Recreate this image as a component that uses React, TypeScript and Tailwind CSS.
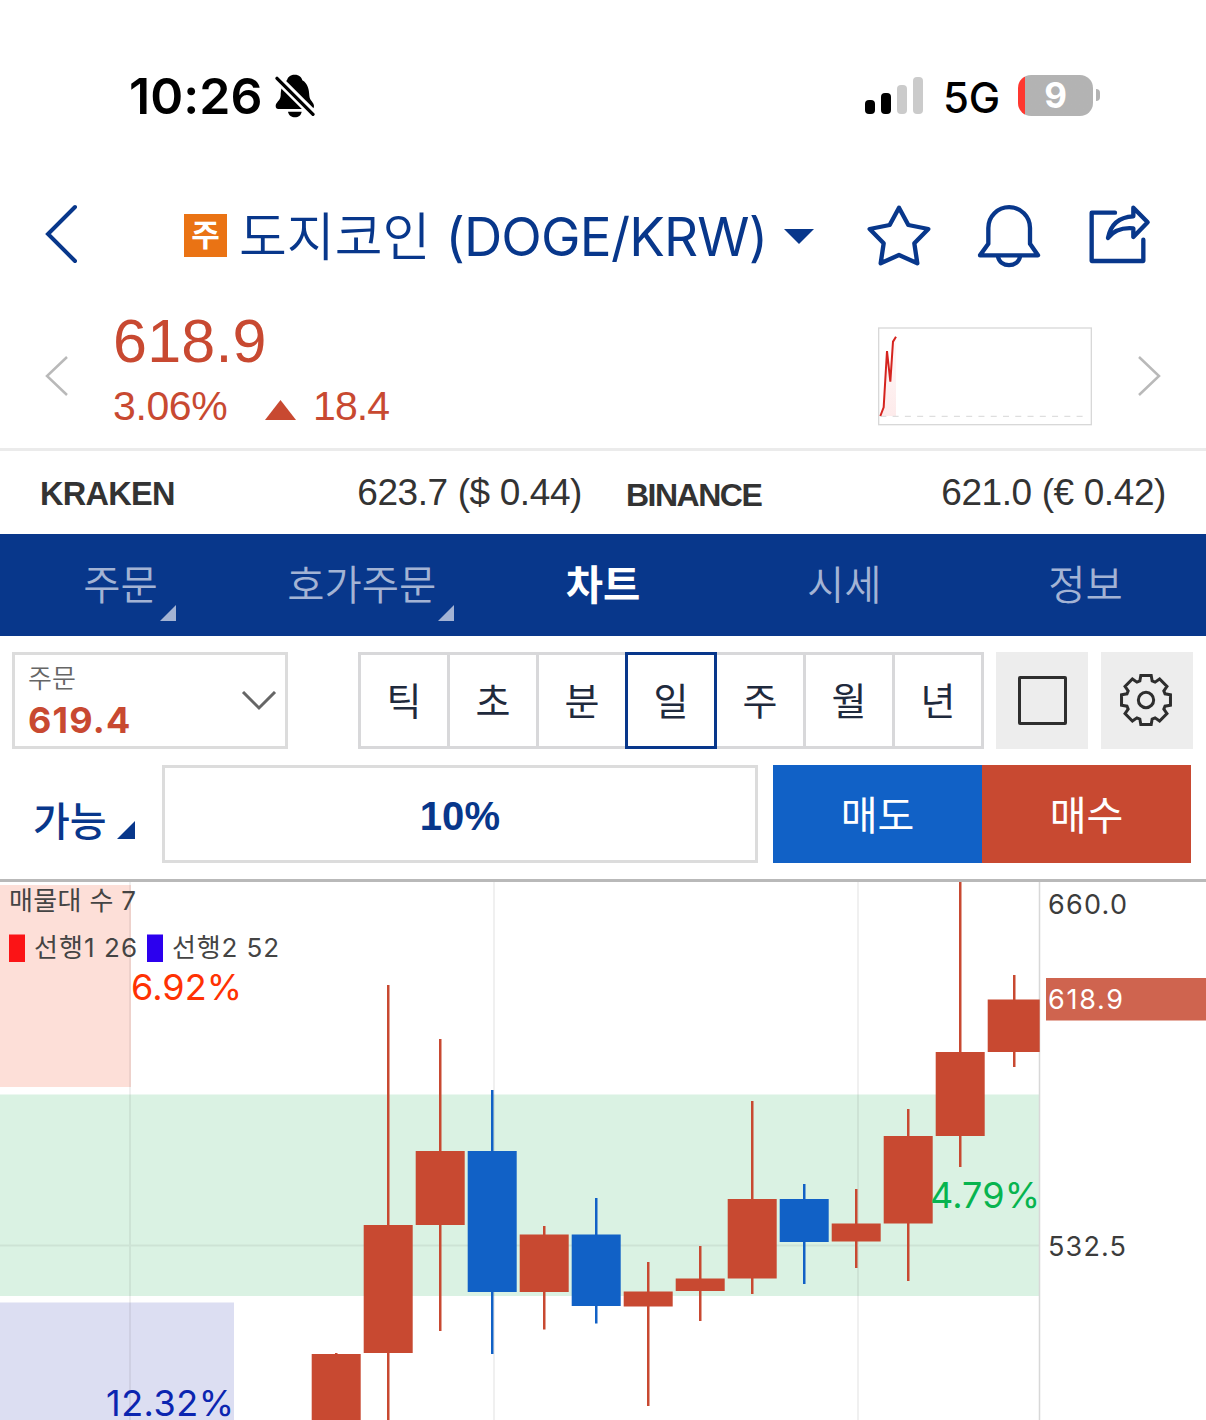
import { clsx } from 'clsx';

type Candle = {
  x: number;
  high: number;
  top: number;
  bottom: number;
  low: number;
  down?: boolean;
  w?: number;
};

const UP = '#c84931';
const DOWN = '#1161c6';

const CANDLES: Candle[] = [
  { x: 312, high: 471, top: 472, bottom: 560, low: 560 },
  { x: 364, high: 103, top: 343, bottom: 471, low: 560 },
  { x: 416, high: 157, top: 269, bottom: 343, low: 449 },
  { x: 468, high: 208, top: 269, bottom: 410, low: 472, down: true },
  { x: 520, high: 344, top: 352.5, bottom: 410, low: 447.5 },
  { x: 572, high: 316, top: 352.5, bottom: 424, low: 441.5, down: true },
  { x: 624, high: 380, top: 409.5, bottom: 424.5, low: 524 },
  { x: 676, high: 364, top: 396.5, bottom: 409, low: 439 },
  { x: 728, high: 219, top: 317, bottom: 396.5, low: 412 },
  { x: 780, high: 302, top: 317, bottom: 360, low: 402, down: true },
  { x: 832, high: 307, top: 341.5, bottom: 359.5, low: 386 },
  { x: 884, high: 227, top: 254, bottom: 341.5, low: 399 },
  { x: 936, high: 0, top: 170, bottom: 254, low: 285 },
  { x: 988, high: 93, top: 117.5, bottom: 170, low: 185, w: 52 },
];

const TABS = [
  { label: '주문', more: true },
  { label: '호가주문', more: true },
  { label: '차트', active: true },
  { label: '시세' },
  { label: '정보' },
];

const PERIODS = ['틱', '초', '분', '일', '주', '월', '년'];

function gearPoints() {
  const points: string[] = [];
  for (let k = 0; k < 8; k++) {
    [
      [-18, 60],
      [-12, 75],
      [12, 75],
      [18, 60],
    ].forEach(([offset, r]) => {
      const a = ((k * 45 + offset) * Math.PI) / 180;
      points.push(`${(r * Math.sin(a)).toFixed(1)},${(-r * Math.cos(a)).toFixed(1)}`);
    });
  }
  return points.join(' ');
}

function StatusBar() {
  return (
    <div className="flex h-[192px] items-center pl-[129px] pr-[106px] text-black">
      <span className="text-[50px] font-semibold leading-none tracking-[0.1px]">10:26</span>
      <svg className="ml-[12px] h-[44px] w-[40px]" viewBox="523 73 120 132">
        <path d="M582 75c14 0 21 8 23 17 17 10 20 28 21 46 1 15 14 19 14 31 0 6-3 9-8 9H533c-5 0-8-3-8-9 0-12 14-16 15-31 1-18 3-36 19-46 2-9 9-17 23-17z" />
        <path d="M562 186h41c-2 11-10 17-20 17s-19-6-21-17z" />
        <path d="M520 76L648 204" stroke="#fff" strokeWidth="26" />
        <path d="M529 86L637 194" stroke="#000" strokeWidth="10" strokeLinecap="round" />
      </svg>
      <div className="mb-[2px] ml-auto flex items-end gap-[6px]">
        <i className="h-[14px] w-[10px] rounded-[4px] bg-black" />
        <i className="h-[21px] w-[10px] rounded-[4px] bg-black" />
        <i className="h-[29px] w-[10px] rounded-[4px] bg-[#cbcbcb]" />
        <i className="h-[37px] w-[10px] rounded-[4px] bg-[#cbcbcb]" />
      </div>
      <span className="ml-[20px] mt-[3px] w-[55px] text-[42px] font-[450] leading-none tracking-[-0.2px]">
        5G
      </span>
      <div className="mb-[2px] ml-[20px] flex h-[41px] w-[75px] items-center justify-center overflow-hidden rounded-[13px] bg-linear-to-r from-[#ff3830] from-[7px] to-[#b3b3b3] to-[7px]">
        <span className="text-[35px] font-bold leading-none text-white">9</span>
      </div>
      <i className="mb-[2px] ml-[3px] h-[12px] w-[4px] rounded-r-full bg-[#b3b3b3]" />
    </div>
  );
}

function Header() {
  return (
    <header className="flex h-[88px] items-center pl-[44px] text-[#08378b]">
      <svg className="mb-[4px] h-[60px] w-[34px]" viewBox="0 0 34 60" fill="none">
        <path
          d="M31 3L4 30L31 57"
          stroke="currentColor"
          strokeWidth="4"
          strokeLinecap="round"
        />
      </svg>
      <div className="mb-[1px] ml-[106px] flex h-[43px] w-[43px] items-center justify-center bg-[#ea7314] text-[31px] font-bold leading-none text-white">
        <span className="mt-[-2px]">주</span>
      </div>
      <h1 className="ml-[12px] flex w-[530px] items-center whitespace-nowrap text-[52px] leading-none">
        <span className="mt-[3px] font-[350]">도지코인</span>
        <span className="ml-[15px] mt-[2px] text-[53px] font-[380] tracking-[-0.8px]">
          (DOGE/KRW)
        </span>
      </h1>
      <svg className="ml-[15px] h-[15px] w-[30px]" viewBox="0 0 30 15">
        <path d="M0 0H30L15 15Z" fill="currentColor" />
      </svg>
      <svg
        className="ml-[52px] h-[64px] w-[66px]"
        viewBox="78 460 198 192"
        fill="none"
        stroke="currentColor"
        strokeWidth="13"
        strokeLinejoin="round"
      >
        <path d="M177 471L205 523L265 535L223 578L232 638L177 613L122 638L131 578L89 535L149 523Z" />
      </svg>
      <svg
        className="ml-[44px] h-[64px] w-[66px]"
        viewBox="410 460 198 192"
        fill="none"
        stroke="currentColor"
        strokeWidth="13"
        strokeLinejoin="round"
      >
        <path d="M447 579V532A62 62 0 0 1 572 532V579L596 614H422Z" />
        <path d="M476 618C482 652 536 652 542 618" />
      </svg>
      <svg
        className="ml-[45px] h-[64px] w-[66px]"
        viewBox="743 460 198 192"
        fill="none"
        stroke="currentColor"
        strokeWidth="13"
        strokeLinejoin="round"
        strokeLinecap="round"
      >
        <path d="M827 486H757V631H912V567" />
        <path d="M806 562C814 520 842 499 882 497V471L925 515L882 559V533C848 530 822 541 806 562Z" />
      </svg>
    </header>
  );
}

function PriceSummary() {
  return (
    <section className="flex h-[171px] items-start border-b-[3px] border-[#ebebeb] pl-[45px] pt-[36px] text-[#c84931]">
      <svg className="mt-[40px] h-[40px] w-[24px]" viewBox="0 0 24 40" fill="none">
        <path d="M22 1L2 20L22 39" stroke="#b9b9b9" strokeWidth="2.5" />
      </svg>
      <div className="ml-[44px] flex w-[765px] flex-col font-['Liberation_Sans']">
        <span className="text-[61px] leading-[50px] tracking-[0.2px]">618.9</span>
        <div className="mt-[20px] flex items-center text-[41px] leading-[40px]">
          <span className="w-[114px] tracking-[-0.4px]">3.06%</span>
          <svg className="ml-[38px] mt-[7px] h-[20px] w-[31px]" viewBox="0 0 31 20">
            <path d="M15.500 0L31 20H0Z" fill="currentColor" />
          </svg>
          <span className="ml-[17px] tracking-[-0.9px]">18.4</span>
        </div>
      </div>
      <svg className="mt-[11px] h-[99px] w-[214px]" viewBox="114 81 642 297" fill="none">
        <defs>
          <linearGradient id="spark" x1="0" y1="0" x2="0" y2="1">
            <stop offset="0" stopColor="#e33" stopOpacity="0.03" />
            <stop offset="1" stopColor="#e33" stopOpacity="0.1" />
          </linearGradient>
        </defs>
        <rect x="116" y="84" width="638" height="290" stroke="#d8d8d8" strokeWidth="4" />
        <path d="M121 348L131 322L141 153L151 245L159 125L168 110V348Z" fill="url(#spark)" />
        <path d="M121 349H735" stroke="#dedede" strokeWidth="4" strokeDasharray="18 18.800" />
        <path d="M121 348L131 322L141 153L151 245L159 125L168 110" stroke="#d5241f" strokeWidth="6" />
      </svg>
      <svg className="ml-[45px] mt-[40px] h-[40px] w-[24px]" viewBox="0 0 24 40" fill="none">
        <path d="M2 1L22 20L2 39" stroke="#b9b9b9" strokeWidth="2.500" />
      </svg>
    </section>
  );
}

function ExchangePrices() {
  return (
    <section className="flex h-[83px] items-center pl-[40px] pr-[40px] font-['Liberation_Sans'] text-[#333]">
      <span className="mt-[4px] w-[135px] text-[32.5px] font-bold tracking-[-0.7px]">KRAKEN</span>
      <span className="ml-auto w-[225px] whitespace-nowrap text-right text-[37px] tracking-[-0.4px]">
        623.7 ($ 0.44)
      </span>
      <span className="ml-[44px] mt-[4px] w-[135px] text-[32px] font-bold tracking-[-1.5px]">
        BINANCE
      </span>
      <span className="ml-[180px] w-[225px] whitespace-nowrap text-right text-[37px] tracking-[-0.4px]">
        621.0 (€ 0.42)
      </span>
    </section>
  );
}

function Tabs() {
  return (
    <nav className="grid h-[102px] grid-cols-5 bg-[#08378b]">
      {TABS.map(({ label, more, active }) => (
        <div key={label} className="flex items-center justify-center pt-[3px]">
          <span
            className={clsx(
              'relative text-[40.5px] leading-none',
              active ? 'font-bold text-white' : 'font-[350] text-[#a3b3d4]',
            )}
          >
            {label}
            {more && (
              <svg className="absolute -right-[18px] -bottom-[14px] h-[16px] w-[16px]" viewBox="0 0 16 16">
                <path d="M16 0V16H0Z" fill="#a3b3d4" />
              </svg>
            )}
          </span>
        </div>
      ))}
    </nav>
  );
}

function ChartToolbar() {
  return (
    <section className="flex h-[246px] flex-col border-b-[3px] border-[#b9b9b9] pt-[16px]">
      <div className="flex h-[97px] pl-[12px]">
        <button className="flex w-[276px] items-center justify-between border-[3px] border-[#dcdcdc] pl-[13px] pr-[8px]">
          <div className="flex flex-col items-start">
            <span className="mt-[3px] text-[26px] font-[350] leading-[30px] text-[#666]">주문</span>
            <span className="mt-[6px] text-[36px] font-bold leading-[40px] tracking-[1.200px] text-[#c84931]">
              619.4
            </span>
          </div>
          <svg className="h-[20px] w-[36px]" viewBox="0 0 36 20" fill="none">
            <path d="M2 1L18 17L34 1" stroke="#666" strokeWidth="3" />
          </svg>
        </button>
        <div className="ml-[70px] flex text-[38px] text-[#1f2a3d]">
          {PERIODS.map((period, i) => (
            <button
              key={period}
              className={clsx(
                'flex w-[92px] items-center justify-center border-[3px] leading-none',
                i > 0 && '-ml-[3px]',
                period === '일' ? 'z-10 border-[#08378b]' : 'border-[#d8d8da]',
              )}
            >
              {period}
            </button>
          ))}
        </div>
        <button className="ml-[12px] flex w-[92px] items-center justify-center bg-[#ededed]">
          <i className="h-[49px] w-[49px] rounded-[2px] border-[3px] border-[#2e2e2e]" />
        </button>
        <button className="ml-[13px] flex w-[92px] items-center justify-center bg-[#ededed] pb-[2px] pr-[2px]">
          <svg
            className="h-[54px] w-[54px]"
            viewBox="-81 -81 162 162"
            fill="none"
            stroke="#2e2e2e"
            strokeWidth="9"
          >
            <polygon points={gearPoints()} />
            <circle r="23" />
          </svg>
        </button>
      </div>
      <div className="mt-[16px] flex h-[98px] pl-[33px]">
        <button className="flex w-[129px] items-center text-[#08378b]">
          <span className="mt-[15px] text-[40px] font-medium leading-none">가능</span>
          <svg className="ml-[10px] mt-[32px] h-[18px] w-[18px]" viewBox="0 0 18 18">
            <path d="M18 0V18H0Z" fill="currentColor" />
          </svg>
        </button>
        <button className="flex w-[596px] items-center justify-center border-[3px] border-[#dcdcdc] text-[40px] font-bold tracking-[0.2px] text-[#08378b]">
          <span className="mt-[4px] font-['Liberation_Sans']">10%</span>
        </button>
        <button className="ml-[15px] w-[209px] bg-[#1161c6] pt-[4px] text-[40px] leading-none text-white">
          매도
        </button>
        <button className="w-[209px] bg-[#c84931] pt-[4px] text-[40px] leading-none text-white">
          매수
        </button>
      </div>
    </section>
  );
}

function CandleChart() {
  return (
    <svg className="block h-[538px] w-[1206px]" viewBox="0 0 1206 538">
      {/** Volume profile bands */}
      <rect x="0" y="3" width="131" height="202" fill="#fddfd8" />
      <rect x="0" y="212.500" width="1040" height="201.500" fill="#daf2e3" />
      <rect x="0" y="420.500" width="234" height="118" fill="#dcdef2" />
      {/** Grid */}
      <g stroke="#000" strokeOpacity="0.06" strokeWidth="2">
        <path d="M130 0V538M494 0V538M858 0V538M0 363.500H1040" />
      </g>
      <path d="M1039.500 0V538" stroke="#d8d8d8" strokeWidth="1.500" />
      {CANDLES.map(({ x, high, top, bottom, low, down, w = 49 }) => (
        <g key={x} fill={down ? DOWN : UP}>
          <rect x={x + Math.floor(w / 2) - 1} y={high} width="2.500" height={low - high} />
          <rect x={x - 0.3} y={top} width={w} height={bottom - top} />
        </g>
      ))}
      {/** Indicator legend */}
      <g fontSize="26" fill="#444">
        <text x="9" y="28" textLength="127">매물대 수 7</text>
        <rect x="9" y="52.500" width="16" height="27.500" fill="#fb1416" />
        <text x="34" y="74.500" textLength="103">선행1 26</text>
        <rect x="147" y="52.500" width="16" height="27.500" fill="#2c00ee" />
        <text x="172" y="74.500" textLength="107">선행2 52</text>
      </g>
      <g fontSize="36">
        <text x="131" y="118" textLength="111" fill="#ff3203">6.92%</text>
        <text x="930" y="326" textLength="110" fill="#07b44f">4.79%</text>
        <text x="106" y="534" textLength="128" fill="#0b25b0">12.32%</text>
      </g>
      {/** Price axis */}
      <rect x="1046" y="96" width="160" height="42.500" fill="#cf644f" />
      <g fontSize="27" fill="#3c3c3c">
        <text x="1048" y="32" textLength="79">660.0</text>
        <text x="1048" y="127" textLength="75" fill="#fff">618.9</text>
        <text x="1048" y="374" textLength="78">532.5</text>
      </g>
    </svg>
  );
}

export default function App() {
  return (
    <main className="h-[1420px] w-[1206px] overflow-hidden bg-white font-['Inter','Noto_Sans_CJK_KR',sans-serif]">
      <StatusBar />
      <Header />
      <PriceSummary />
      <ExchangePrices />
      <Tabs />
      <ChartToolbar />
      <CandleChart />
    </main>
  );
}
